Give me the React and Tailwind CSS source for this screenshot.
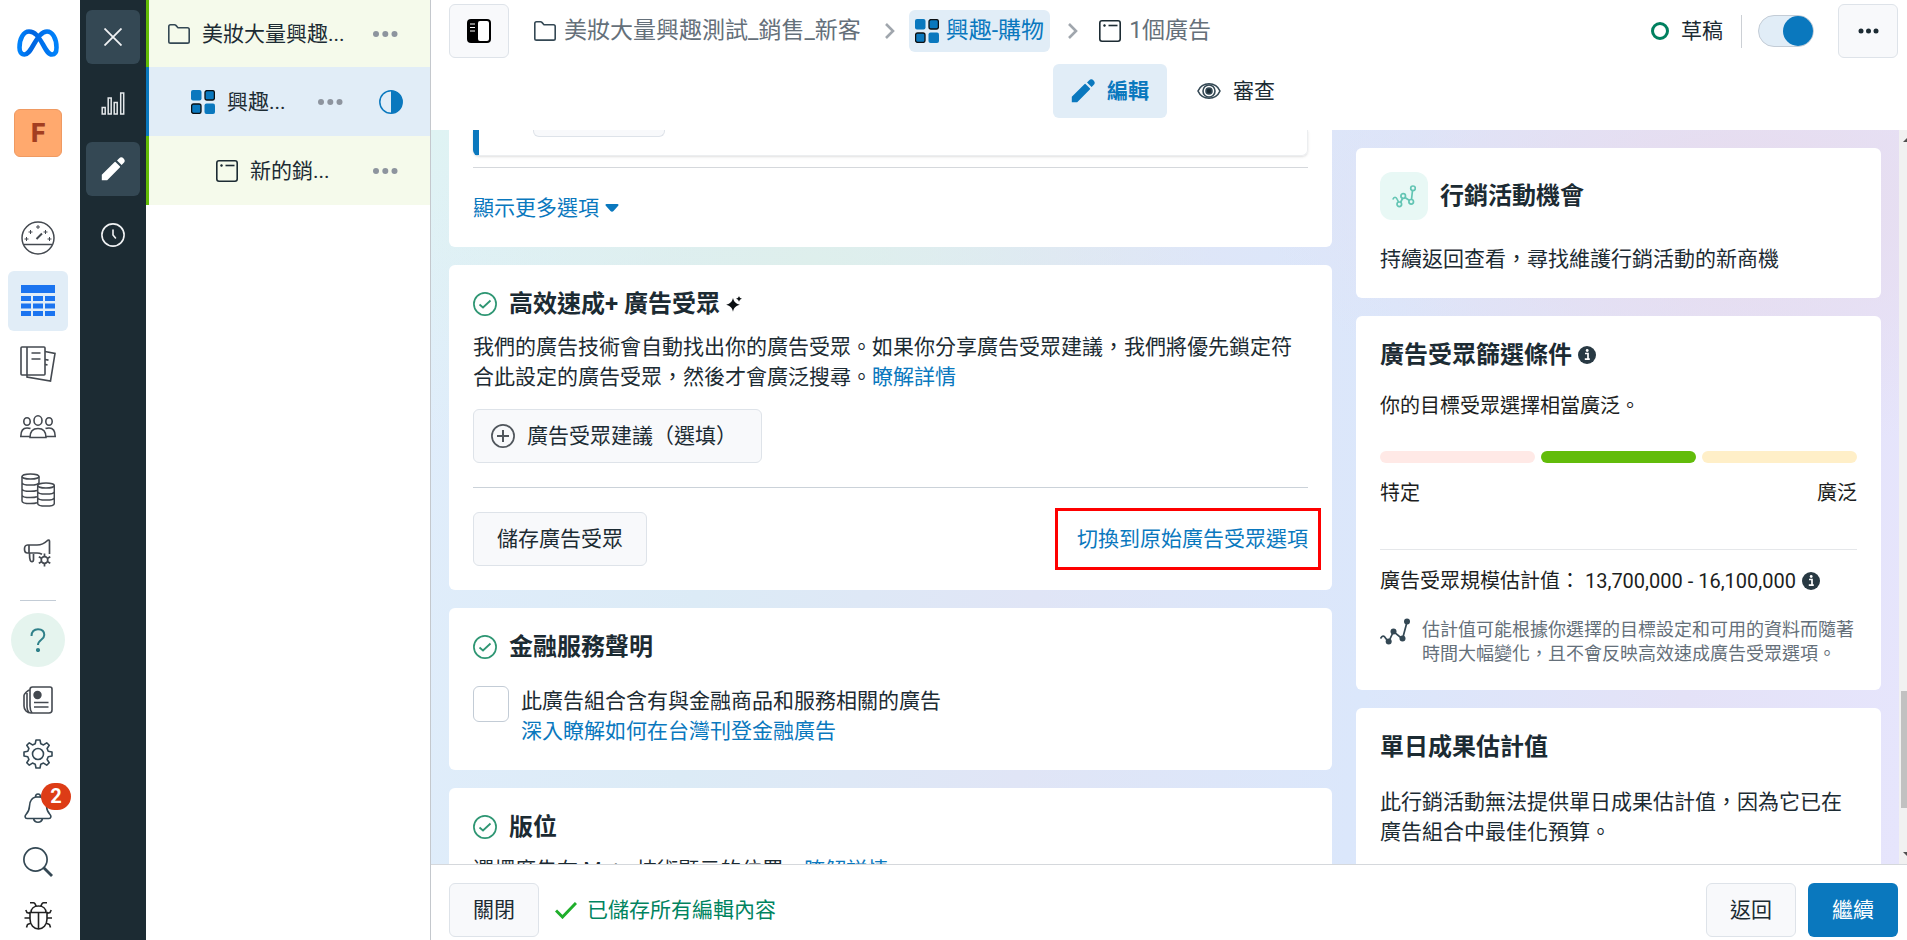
import { useState } from 'react';
import clsx from 'clsx';

const LINK = 'text-[#0a78be] hover:underline';
const OUTLINE_BUTTON =
  'flex items-center justify-center rounded-md border border-[#dee3e9] bg-[#f8f9fb] h-[54px] shrink-0';

/* ---------- icons ---------- */

function MetaLogo() {
  return (
    <svg width="42" height="28" viewBox="0 0 42 28" fill="none" strokeWidth="4.6">
      <defs>
        <linearGradient id="meta" x1="0" x2="1" y1="0" y2="0">
          <stop offset="0" stopColor="#0082fb" />
          <stop offset="0.35" stopColor="#0064e0" />
          <stop offset="0.65" stopColor="#0073ee" />
          <stop offset="1" stopColor="#0082fb" />
        </linearGradient>
      </defs>
      <path
        stroke="url(#meta)"
        strokeLinejoin="round"
        d="M2.500 18.500C2.500 9.500 6.500 2.500 12 2.500c6 0 9.500 5 14 13 3.500 6.500 5.500 10 9 10 3 0 4.500-2.500 4.500-7 0-9-4-16-9.500-16-5 0-8.500 4.500-13 12.500-4.500 8-6.500 10.500-9.500 10.500-3.500 0-5-3-5-7z"
      />
    </svg>
  );
}

function GaugeIcon() {
  return (
    <svg width="34" height="34" viewBox="0 0 34 34" fill="none" stroke="#444950" strokeWidth="1.500">
      <circle cx="17" cy="17" r="16" />
      <path d="M3 23.500h28" />
      <path d="M15.500 18l5.500-5.500" strokeWidth="2" />
      <path d="M17 4v4M15 6h4M9.500 9v4M7.500 11h4M24.500 9v4M22.500 11h4M5.500 16v4M3.500 18h4M28.500 16v4M26.500 18h4" strokeWidth="1" />
    </svg>
  );
}

function TableIcon() {
  return (
    <svg width="34" height="32" viewBox="0 0 34 32" fill="#1b74f0">
      <path d="M0 0h34v8H0zM0 11h10v5H0zM12 11h10v5H12zM24 11h10v5H24zM0 18.500h10v5H0zM12 18.500h10v5H12zM24 18.500h10v5H24zM0 26h10v5H0zM12 26h10v5H12zM24 26h10v5H24z" />
    </svg>
  );
}

function PagesIcon() {
  return (
    <svg width="36" height="36" viewBox="0 0 36 36" fill="none" stroke="#444950" strokeWidth="1.600">
      <rect x="1" y="1" width="24" height="28" rx="1" />
      <path d="M7 1v28M11.500 7h9M11.500 13h9M25 5.500l10 2-4.500 27.500-23.500-4v-2M25 13.500l3.500.6M25 18.500l2.500.4" />
    </svg>
  );
}

function PeopleIcon() {
  return (
    <svg width="36" height="24" viewBox="0 0 36 24" fill="none" stroke="#444950" strokeWidth="1.600">
      <ellipse cx="18" cy="5.500" rx="4" ry="4.700" />
      <ellipse cx="7" cy="6.500" rx="3.200" ry="3.700" />
      <ellipse cx="29" cy="6.500" rx="3.200" ry="3.700" />
      <path d="M10 22.500c0-6 3-9 8-9s8 3 8 9zM10.500 13.500C9.500 13 8 13 7 13c-4 0-6.200 3-6.200 8.500H10M25.500 13.500c1-.5 2.500-.5 3.500-.5 4 0 6.200 3 6.200 8.500H26" />
    </svg>
  );
}

function CoinsIcon() {
  return (
    <svg width="34" height="34" viewBox="0 0 34 34" fill="none" stroke="#444950" strokeWidth="1.500">
      <ellipse cx="9.500" cy="3.500" rx="8.500" ry="2.600" />
      <path d="M1 3.500v24.500c0 1.600 4 2.600 8.500 2.600 2.500 0 5-.3 6.500-.8M18 3.500v7M1 9.500c0 1.600 4 2.600 8.500 2.600S18 11 18 9.500M1 15.700c0 1.600 4 2.600 8.500 2.600 2.500 0 5-.3 6.500-.8M1 22c0 1.600 4 2.600 8.500 2.600 2.500 0 5-.3 6.500-.8" />
      <ellipse cx="25" cy="12.500" rx="8.300" ry="2.600" />
      <path d="M16.700 12.500v18c0 1.600 4 2.600 8.300 2.600s8.300-1 8.300-2.600v-18M16.700 18.500c0 1.600 4 2.600 8.300 2.600s8.300-1 8.300-2.600M16.700 24.500c0 1.600 4 2.600 8.300 2.600s8.300-1 8.300-2.600" />
    </svg>
  );
}

function MegaphoneIcon() {
  return (
    <svg width="30" height="28" viewBox="0 0 30 28" fill="none" stroke="#444950" strokeWidth="1.700" strokeLinejoin="round">
      <path d="M6 6h8c4 0 8-2 10.500-4.500 1-.9 2-.5 2 .8V15M6 6H4.500C2.500 6 1.500 8 1.500 10s1 4 3 4H14c2 0 3.500.5 5 1.300M6 6v8M6.500 14.500c0 3 0 5 .8 7 .7 1.700 3.200 1.500 3.200-.5v-6" />
      <circle cx="21.500" cy="21" r="3.300" />
      <path d="M21.500 14.500v3M21.500 24.500v3M15.800 17.800l2.700 1.500M24.600 22.700l2.700 1.500M15.800 24.200l2.700-1.500M24.600 19.300l2.700-1.500" />
    </svg>
  );
}

function NewsIcon() {
  return (
    <svg width="30" height="28" viewBox="0 0 30 28" fill="none" stroke="#444950" strokeWidth="1.600" strokeLinejoin="round">
      <path d="M7 3.500C7 2 8 1 9.500 1H27c1.300 0 2 .8 2 2v21c0 2-.8 3-3 3H8c-4 0-7-3-7-7V9.500C1 8 4 5 7 3.500zM7 3.500V20c0 3 .5 5 2 7M4 7v14c0 2 .8 4 2 5M11 16.500h14.500M11 21h14.500" />
      <circle cx="14.500" cy="9" r="3.400" fill="#444950" />
    </svg>
  );
}

function GearIcon() {
  return (
    <svg width="30" height="30" viewBox="0 0 30 30" fill="none" stroke="#344854" strokeWidth="1.600" strokeLinejoin="round">
      <circle cx="15" cy="15" r="5.500" />
      <path d="M13 1h4l.8 3.800 2.700 1.100 3.200-2.100 2.500 2.500-2.100 3.200 1.100 2.700L29 13v4l-3.800.8-1.100 2.700 2.100 3.200-2.500 2.500-3.200-2.100-2.700 1.100L17 29h-4l-.8-3.800-2.700-1.100-3.200 2.100-2.500-2.500 2.100-3.200-1.100-2.700L1 17v-4l3.800-.8 1.100-2.700-2.100-3.200 2.500-2.500 3.200 2.100 2.700-1.100z" />
    </svg>
  );
}

function BellIcon() {
  return (
    <svg width="28" height="30" viewBox="0 0 28 30" fill="none" stroke="#344854" strokeWidth="1.600" strokeLinejoin="round">
      <path d="M11.500 4C11.500 2 12.500 1 14 1s2.500 1 2.500 3c4 1 5.800 4.500 6 9 .2 4 1.500 6.500 3.500 8.500 1.500 1.600 1 4-1 4H3c-2 0-2.500-2.400-1-4 2-2 3.300-4.500 3.500-8.500.2-4.500 2-8 6-9zM9.500 25.500c.5 2.300 2.200 3.700 4.500 3.700s4-1.400 4.500-3.700" />
      <path d="M11.500 4h5" />
    </svg>
  );
}

function SearchIcon() {
  return (
    <svg width="30" height="30" viewBox="0 0 30 30" fill="none" stroke="#344854">
      <circle cx="12.500" cy="12.500" r="11.600" strokeWidth="1.700" />
      <path d="M20.500 20.500l8.500 8.500" strokeWidth="2.800" />
    </svg>
  );
}

function BugIcon() {
  return (
    <svg width="28" height="28" viewBox="0 0 28 28" fill="none" stroke="#222" strokeWidth="1.600">
      <path d="M6 10.500h17V17c0 6-4 10-8.500 10S6 23 6 17zM14.500 10.500V27M7 10.500C7 6.500 10 4 14.500 4S22 6.500 22 10.500M6 .8h3.500c1 0 2 1.500 2.500 3.400M23 .8h-3.500c-1 0-2 1.500-2.500 3.400M6.500 11.500L3 10.500 1.800 8M6 16H.5M7 21l-3.500 1.500-1 3M22.500 11.500l3.500-1L27.200 8M23 16h5M22 21l3.500 1.500 1 3" />
    </svg>
  );
}

function ChartIcon() {
  return (
    <svg width="24" height="23" viewBox="0 0 24 23" fill="none" stroke="#e4e8eb" strokeWidth="1.500">
      <path d="M1.200 15.500h3v6.500h-3zM7.200 6h3v16h-3zM13.200 10.500h3V22h-3zM19.700 1h3v21h-3z" />
    </svg>
  );
}

function PencilIcon() {
  return (
    <svg width="24" height="24" viewBox="0 0 24 24" fill="currentColor">
      <path d="M.8 23.200v-5.400L13.400 5.200a1 1 0 0 1 1.400 0l4 4a1 1 0 0 1 0 1.400L6.200 23.200zM16 3.400l2-2a3 3 0 0 1 4.600 4.600l-2 2z" />
    </svg>
  );
}

function ClockIcon() {
  return (
    <svg width="24" height="24" viewBox="0 0 24 24" fill="none" stroke="#f0f2f4" strokeWidth="1.600" strokeLinecap="round">
      <circle cx="12" cy="12" r="11.100" />
      <path d="M12 7v5l2.500 3" />
    </svg>
  );
}

function FolderIcon() {
  return (
    <svg width="22" height="20" viewBox="0 0 22 20" fill="none" stroke="#344854" strokeWidth="1.600" strokeLinejoin="round" className="shrink-0">
      <path d="M.8 2.500C.8 1.500 1.500.8 2.500.8h4c.6 0 1 .2 1.400.6L10 3.700h9.500c1 0 1.700.7 1.700 1.700v12c0 1-.7 1.700-1.700 1.700h-17c-1 0-1.700-.7-1.700-1.700z" />
    </svg>
  );
}

function AdSetIcon() {
  return (
    <svg width="24" height="24" viewBox="0 0 24 24" fill="#0a78be" className="shrink-0">
      <rect width="10.500" height="10.500" rx="2" />
      <rect x="13.500" y="13.500" width="10.500" height="10.500" rx="2" />
      <rect x="14" y=".6" width="9.400" height="9.400" rx="2" stroke="#0b0f12" strokeWidth="1.300" />
      <rect x=".6" y="14" width="9.400" height="9.400" rx="2" stroke="#0b0f12" strokeWidth="1.300" />
    </svg>
  );
}

function AdIcon() {
  return (
    <svg width="22" height="22" viewBox="0 0 22 22" fill="none" stroke="#1c2b33" strokeWidth="1.600" className="shrink-0">
      <rect x=".8" y=".8" width="20.400" height="20.400" rx="2.200" />
      <path d="M9.500 5.500h9" />
      <circle cx="5.500" cy="5.500" r="1" fill="#1c2b33" strokeWidth=".6" />
    </svg>
  );
}

function Dots() {
  return (
    <svg width="25" height="6" viewBox="0 0 25 6" fill="#8d949e">
      <circle cx="3" cy="3" r="3" />
      <circle cx="12.300" cy="3" r="3" />
      <circle cx="21.500" cy="3" r="3" />
    </svg>
  );
}

function ContrastIcon() {
  return (
    <svg width="24" height="24" viewBox="0 0 24 24">
      <circle cx="12" cy="12" r="11.200" fill="none" stroke="#0a78be" strokeWidth="1.500" />
      <path d="M12 .8a11.200 11.200 0 0 1 0 22.400z" fill="#0a78be" />
    </svg>
  );
}

function ChevronIcon() {
  return (
    <svg width="10" height="16" viewBox="0 0 10 16" fill="none" stroke="#a0a6ad" strokeWidth="2.600" className="shrink-0">
      <path d="M1 1l7 7-7 7" />
    </svg>
  );
}

function EyeIcon() {
  return (
    <svg width="24" height="16" viewBox="0 0 24 16" fill="none" stroke="#344854" strokeWidth="1.600">
      <path d="M1 8c2-4.500 6-7.200 11-7.200S21 3.500 23 8c-2 4.500-6 7.200-11 7.200S3 12.500 1 8z" />
      <circle cx="12" cy="8" r="6" />
      <circle cx="12" cy="8" r="3" fill="#1c2b33" />
    </svg>
  );
}

function CheckCircle() {
  return (
    <svg width="24" height="24" viewBox="0 0 24 24" fill="none" stroke="#2e9673" strokeWidth="1.700" className="shrink-0">
      <circle cx="12" cy="12" r="11.100" />
      <path d="M6.500 12.500l3.500 3 7.500-7" strokeWidth="1.800" />
    </svg>
  );
}

function PlusCircle() {
  return (
    <svg width="24" height="24" viewBox="0 0 24 24" fill="none" stroke="#50565c" className="shrink-0">
      <circle cx="12" cy="12" r="11.100" strokeWidth="1.700" />
      <path d="M12 6v12M6 12h12" strokeWidth="2" />
    </svg>
  );
}

function InfoIcon() {
  return (
    <svg width="18" height="18" viewBox="0 0 18 18" className="shrink-0">
      <circle cx="9" cy="9" r="9" fill="#283943" />
      <path d="M7 7.500h3v5.500M6.800 13.200h5" stroke="#fff" strokeWidth="1.700" fill="none" />
      <circle cx="9.200" cy="4.500" r="1.400" fill="#fff" />
    </svg>
  );
}

function SparkleIcon() {
  return (
    <svg width="16" height="16" viewBox="0 0 16 16" fill="#0b0f12">
      <path d="M7 2c1 3.700 2.500 5.500 6.800 6.800C9.500 10 8 11.700 7 15.800 6 11.700 4.500 10 .2 8.800 4.500 7.500 6 5.700 7 2zM13 0c.5 1.500 1.100 2.200 3 2.700-1.900.6-2.500 1.300-3 3-.5-1.700-1.100-2.400-3-3 1.900-.5 2.500-1.200 3-2.700z" />
    </svg>
  );
}

function TrendIcon({ hollow }) {
  if (hollow) {
    return (
      <svg width="24" height="23" viewBox="0 0 24 23" fill="none" stroke="#63c5b4" strokeWidth="1.700">
        <path d="M.8 14.500c1.200-3 3.200-3 4.500 0l1.200 2.500M8.500 17.500l2-4M13 12.500l4.500 3M19.500 14.500l1-9" />
        <circle cx="7.300" cy="19.300" r="2.300" />
        <circle cx="11.200" cy="11" r="2.300" />
        <circle cx="19.200" cy="16.800" r="2.300" />
        <circle cx="21" cy="3.300" r="2.300" />
      </svg>
    );
  }
  return (
    <svg width="30" height="27" viewBox="0 0 30 27" stroke="#344854" fill="none" strokeWidth="1.700" className="shrink-0">
      <path d="M.5 20.500C2 17.500 4 17.500 5.500 20l3 4 5-10.500 9 7.500 4.500-17" />
      <g fill="#344854" stroke="none">
        <circle cx="8.700" cy="23.500" r="3" />
        <circle cx="13.500" cy="13.500" r="3" />
        <circle cx="22.500" cy="20.500" r="3" />
        <circle cx="27" cy="3.500" r="3" />
      </g>
    </svg>
  );
}

/* ---------- navigation ---------- */

const NAV = [
  { label: '帳號總覽', Icon: GaugeIcon },
  { label: '行銷活動', Icon: TableIcon, active: true },
  { label: '廣告報告', Icon: PagesIcon },
  { label: '廣告受眾', Icon: PeopleIcon },
  { label: '帳單與付款', Icon: CoinsIcon },
  { label: '廣告設定', Icon: MegaphoneIcon },
];

const TOOLS = [
  { label: '最新消息', Icon: NewsIcon },
  { label: '設定', Icon: GearIcon },
  { label: '通知', Icon: BellIcon, badge: 2 },
  { label: '搜尋', Icon: SearchIcon },
  { label: '回報問題', Icon: BugIcon },
];

function Rail() {
  return (
    <nav className="flex w-20 shrink-0 flex-col items-center bg-white pr-1 pt-4">
      <a href="#" aria-label="Meta" className="flex h-[54px] w-[60px] shrink-0 items-center justify-center">
        <MetaLogo />
      </a>
      <button className="mt-[39px] size-12 shrink-0 rounded-md border border-[#ef9a62] bg-[#ffa96e] text-[26px] font-black text-[#a33e20]">
        F
      </button>

      <div className="mt-[51px] flex flex-col gap-[3px]">
        {NAV.map(({ label, Icon, active }) => (
          <a
            key={label}
            href="#"
            aria-label={label}
            className={clsx('flex size-[60px] items-center justify-center rounded-md', active && 'bg-[#e1edf7]')}
          >
            <Icon />
          </a>
        ))}
      </div>

      <div className="mt-[17px] h-px w-9 shrink-0 bg-[#c3ccd6]" />
      <button
        aria-label="說明"
        className="mt-3 flex size-[54px] shrink-0 items-center justify-center rounded-full bg-[#e5f4ee]"
      >
        <svg width="16" height="24" viewBox="0 0 16 24" fill="none" stroke="#2f8089" strokeWidth="2">
          <path d="M1.500 8C1.500 3.800 4 1.200 8 1.200s6.300 2.300 6.300 5.800c0 5-6.300 4.500-6.300 10" />
          <circle cx="8" cy="22" r="1.100" fill="#2f8089" />
        </svg>
      </button>

      <div className="mt-1.5 flex flex-col">
        {TOOLS.map(({ label, Icon, badge }) => (
          <button key={label} aria-label={label} className="relative flex h-[54px] w-[60px] items-center justify-center">
            <Icon />
            {badge && (
              <span className="absolute -right-[3px] top-0.5 flex h-[27px] w-[30px] items-center justify-center rounded-full bg-[#dd3c16] text-[20px]/[27px] font-bold text-white">
                {badge}
              </span>
            )}
          </button>
        ))}
      </div>
    </nav>
  );
}

function Sidebar() {
  return (
    <div className="flex w-[66px] shrink-0 flex-col items-center gap-3 bg-[#1c2b33] pt-2.5">
      <button aria-label="關閉" className="flex size-[54px] items-center justify-center rounded-md bg-[#344854]">
        <svg width="18" height="18" viewBox="0 0 18 18" stroke="#f0f2f4" strokeWidth="1.800">
          <path d="M.5.5l17 17M17.500.5l-17 17" />
        </svg>
      </button>
      <button aria-label="圖表" className="flex size-[54px] items-center justify-center rounded-md">
        <ChartIcon />
      </button>
      <button
        aria-label="編輯"
        className="flex size-[54px] items-center justify-center rounded-md bg-[#344854] text-white"
      >
        <PencilIcon />
      </button>
      <button aria-label="歷史紀錄" className="flex size-[54px] items-center justify-center rounded-md">
        <ClockIcon />
      </button>
    </div>
  );
}

function Tree() {
  return (
    <aside className="w-[285px] shrink-0 border-r border-[#c4c8cd] bg-white text-[21px]/[30px]">
      <div className="flex h-[67px] items-center border-l-[3px] border-[#62bc06] bg-[#f5faeb] pl-[19px] pr-8">
        <FolderIcon />
        <span className="ml-3 flex-1">美妝大量興趣...</span>
        <button aria-label="更多">
          <Dots />
        </button>
      </div>
      <div className="flex h-[69px] items-center border-l-[3px] border-[#0a78be] bg-[#e1edf7] pl-[42px] pr-[27px]">
        <AdSetIcon />
        <span className="ml-3 flex-1">興趣...</span>
        <button aria-label="更多">
          <Dots />
        </button>
        <span className="ml-9">
          <ContrastIcon />
        </span>
      </div>
      <div className="flex h-[69px] items-center border-l-[3px] border-[#62bc06] bg-[#f5faeb] pl-[67px] pr-8">
        <AdIcon />
        <span className="ml-3 flex-1">新的銷...</span>
        <button aria-label="更多">
          <Dots />
        </button>
      </div>
    </aside>
  );
}

/* ---------- header ---------- */

function Header({ enabled, onToggle }) {
  return (
    <header className="shrink-0 bg-white pb-3 pt-1">
      <div className="flex items-center pl-[18px] pr-[9px]">
        <button aria-label="切換面板" className={clsx(OUTLINE_BUTTON, 'w-[60px]')}>
          <svg width="24" height="24" viewBox="0 0 24 24">
            <rect width="24" height="24" rx="4" fill="#000" />
            <rect x="11" y="2" width="11" height="20" rx="2" fill="#fff" />
            <path d="M3 5h5M3 8.500h5M3 12h5" stroke="#fff" strokeWidth="1.200" />
          </svg>
        </button>
        <nav className="ml-[25px] flex items-center text-[23px]/[30px] text-[#65707a]">
          <a href="#" className="flex items-center gap-2">
            <FolderIcon />
            美妝大量興趣測試_銷售_新客
          </a>
          <span className="ml-6 mr-3.5">
            <ChevronIcon />
          </span>
          <a href="#" className="flex h-[42px] items-center gap-[7px] rounded-md bg-[#e1edf7] px-1.5 text-[#0a78be]">
            <AdSetIcon />
            興趣-購物
          </a>
          <span className="ml-[18px] mr-[21px]">
            <ChevronIcon />
          </span>
          <a href="#" className="flex items-center gap-2">
            <AdIcon />
            1個廣告
          </a>
        </nav>

        <div className="ml-auto flex items-center">
          <span className="size-[18px] rounded-full border-[3px] border-[#00805f]" />
          <span className="ml-3 text-[21px]/[30px]">草稿</span>
          <span className="ml-[18px] h-[33px] w-px bg-[#ccd0d5]" />
          <label className="ml-4 mr-6 flex">
            <input type="checkbox" className="peer sr-only" aria-label="啟用" checked={enabled} onChange={onToggle} />
            <span className="flex h-8 w-14 items-center justify-start rounded-full border border-[#c3ccd6] bg-[#e1edf7] peer-checked:justify-end">
              <span className="size-[30px] rounded-full bg-[#0a78be]" />
            </span>
          </label>
          <button aria-label="更多選項" className={clsx(OUTLINE_BUTTON, 'w-[60px]')}>
            <svg width="21" height="6" viewBox="0 0 21 6" fill="#1c2b33">
              <circle cx="3" cy="3" r="2.500" />
              <circle cx="10.500" cy="3" r="2.500" />
              <circle cx="18" cy="3" r="2.500" />
            </svg>
          </button>
        </div>
      </div>

      <div className="mt-1.5 flex justify-center gap-3 pl-2 text-[21px]/[30px]">
        <button className="flex h-[54px] items-center gap-3 rounded-md bg-[#e1edf7] px-[18px] font-bold text-[#0a78be]">
          <PencilIcon />
          編輯
        </button>
        <button className="flex h-[54px] items-center gap-3 rounded-md px-[18px]">
          <EyeIcon />
          審查
        </button>
      </div>
    </header>
  );
}

/* ---------- content ---------- */

function Card({ className, children }) {
  return <section className={clsx('rounded-md bg-white p-6', className)}>{children}</section>;
}

function CheckedTitle({ children }) {
  return (
    <h2 className="flex items-center gap-3 text-[24px]/[30px] font-bold">
      <CheckCircle />
      <span className="flex items-center">{children}</span>
    </h2>
  );
}

function MainColumn() {
  return (
    <div className="flex min-w-0 flex-1 flex-col gap-[18px]">
      <section className="rounded-b-md bg-white px-6 pb-6">
        <div className="h-[26px] rounded-b-md border-b border-l-[6px] border-r border-[#eceef0] border-l-[#0a78be] pl-[54px] shadow-sm">
          <div className="h-[7px] w-[132px] rounded-b-md border border-t-0 border-[#dee3e9] bg-[#f8f9fb]" />
        </div>
        <div className="mt-[11px] h-px bg-[#d5d8dc]" />
        <button className={clsx('mt-[25px] flex items-center gap-1.5 text-[21px]/[30px]', LINK)}>
          顯示更多選項
          <svg width="14" height="8" viewBox="0 0 14 8" fill="#0a78be">
            <path d="M1.500 0h11c1 0 1.300 1 .7 1.700L8.500 7c-.8 1-2.200 1-3 0L.8 1.700C.2 1 .5 0 1.500 0z" />
          </svg>
        </button>
      </section>

      <Card>
        <CheckedTitle>
          高效速成+ 廣告受眾
          <span className="ml-1.5">
            <SparkleIcon />
          </span>
        </CheckedTitle>
        <p className="mt-[13px] text-[21px]/[30px]">
          我們的廣告技術會自動找出你的廣告受眾。如果你分享廣告受眾建議，我們將優先鎖定符合此設定的廣告受眾，然後才會廣泛搜尋。
          <a href="#" className={LINK}>瞭解詳情</a>
        </p>
        <button className={clsx(OUTLINE_BUTTON, 'mt-[17px] gap-3 pl-[17px] pr-6 text-[21px]/[30px]')}>
          <PlusCircle />
          廣告受眾建議（選填）
        </button>
        <div className="mt-6 h-px bg-[#cbd2d9]" />
        <div className="mt-6 flex items-center justify-between text-[21px]/[30px]">
          <button className={clsx(OUTLINE_BUTTON, 'px-[23px]')}>儲存廣告受眾</button>
          <div className="relative">
            <a href="#" className={LINK}>切換到原始廣告受眾選項</a>
            <div className="pointer-events-none absolute -inset-y-4 -left-[22px] -right-[13px] border-[3px] border-[#fe0000]" />
          </div>
        </div>
      </Card>

      <Card>
        <CheckedTitle>金融服務聲明</CheckedTitle>
        <div className="mt-6 flex items-start gap-3 text-[21px]/[30px]">
          <input
            id="finance"
            type="checkbox"
            className="size-9 shrink-0 appearance-none rounded-md border border-[#c3ccd6] bg-white checked:bg-[#0a78be]"
          />
          <div>
            <label htmlFor="finance" className="block">此廣告組合含有與金融商品和服務相關的廣告</label>
            <a href="#" className={LINK}>深入瞭解如何在台灣刊登金融廣告</a>
          </div>
        </div>
      </Card>

      <Card>
        <CheckedTitle>版位</CheckedTitle>
        <p className="mt-[13px] text-[21px]/[30px]">
          選擇廣告在 Meta 技術顯示的位置。
          <a href="#" className={LINK}>瞭解詳情</a>
        </p>
      </Card>
    </div>
  );
}

function InsightColumn() {
  return (
    <div className="flex w-[525px] shrink-0 flex-col gap-[18px] pt-[18px]">
      <Card>
        <div className="flex items-center gap-3">
          <span className="flex size-12 items-center justify-center rounded-xl bg-[#e8f8f5]">
            <TrendIcon hollow />
          </span>
          <h2 className="text-[24px]/[30px] font-bold">行銷活動機會</h2>
        </div>
        <p className="mt-6 text-[21px]/[30px]">持續返回查看，尋找維護行銷活動的新商機</p>
      </Card>

      <Card>
        <h2 className="flex items-center gap-1.5 text-[24px]/[30px] font-bold">
          廣告受眾篩選條件
          <InfoIcon />
        </h2>
        <p className="mt-[21px] text-[20px]/[30px] text-[#1c1e21]">你的目標受眾選擇相當廣泛。</p>
        <div className="mt-[30px] grid h-3 grid-cols-3 gap-1.5">
          <span className="rounded-full bg-[#ffe9e6]" />
          <span className="rounded-full bg-[#62bc0a]" />
          <span className="rounded-full bg-[#ffefc8]" />
        </div>
        <div className="mt-[15px] flex justify-between text-[20px]/[30px] text-[#1c1e21]">
          <span>特定</span>
          <span>廣泛</span>
        </div>
        <div className="mt-[41px] h-px bg-[#e5e7ea]" />
        <p className="mt-4 flex items-center gap-1.5 text-[20px]/[30px] text-[#1c1e21]">
          <span>廣告受眾規模估計值： 13,700,000 - 16,100,000</span>
          <InfoIcon />
        </p>
        <div className="mt-[22px] flex items-start gap-3 text-[18px]/[24px] text-[#65707a]">
          <TrendIcon />
          <p className="-mr-2">估計值可能根據你選擇的目標設定和可用的資料而隨著時間大幅變化，且不會反映高效速成廣告受眾選項。</p>
        </div>
      </Card>

      <Card className="h-[260px] shrink-0">
        <h2 className="text-[24px]/[30px] font-bold">單日成果估計值</h2>
        <p className="mt-[25px] text-[21px]/[30px]">此行銷活動無法提供單日成果估計值，因為它已在廣告組合中最佳化預算。</p>
      </Card>
    </div>
  );
}

function Scrollbar() {
  return (
    <div className="flex w-2 shrink-0 flex-col items-end overflow-hidden bg-[#f1f1f1] pl-0.5">
      <svg width="4" height="4" viewBox="0 0 4 4" fill="#505050" className="mt-2">
        <path d="M4 0v4H0z" />
      </svg>
      <div className="flex-[549]" />
      <div className="w-full flex-[117] bg-[#c1c1c1]" />
      <div className="flex-[44]" />
      <svg width="4" height="4" viewBox="0 0 4 4" fill="#505050" className="mb-2">
        <path d="M0 0h4v4z" />
      </svg>
    </div>
  );
}

function Footer() {
  return (
    <footer className="flex shrink-0 items-center border-t border-[#d5d8dc] bg-white pb-[3px] pl-[18px] pr-[9px] pt-[18px] text-[21px]/[30px]">
      <button className={clsx(OUTLINE_BUTTON, 'w-[90px]')}>關閉</button>
      <svg width="22" height="17" viewBox="0 0 22 17" fill="none" stroke="#1fae2b" strokeWidth="3" className="ml-4">
        <path d="M1 8.500l6.500 6.500L21 1" />
      </svg>
      <span className="ml-2.5 flex-1 text-[#00845f]">已儲存所有編輯內容</span>
      <button className={clsx(OUTLINE_BUTTON, 'w-[90px]')}>返回</button>
      <button className="ml-3 h-[54px] w-[90px] rounded-md bg-[#0a78be] text-white">繼續</button>
    </footer>
  );
}

export default function App() {
  const [enabled, setEnabled] = useState(true);

  return (
    <div
      lang="zh-Hant"
      className="flex h-screen overflow-hidden bg-white font-[Roboto,'Noto_Sans_CJK_TC',sans-serif] text-[#1c2b33]"
    >
      <Rail />
      <Sidebar />
      <Tree />
      <main className="flex min-w-0 flex-1 flex-col">
        <Header enabled={enabled} onToggle={() => setEnabled(!enabled)} />
        <div className="flex min-h-0 flex-1">
          <div className="flex min-w-0 flex-1 gap-6 overflow-hidden bg-[radial-gradient(ellipse_at_26%_18%,#deefec_0%,transparent_26%),radial-gradient(ellipse_at_90%_10%,#e7dcee_0%,transparent_26%),radial-gradient(ellipse_at_0%_0%,#dff3f3_0%,transparent_30%),linear-gradient(95deg,#e0edfb_0%,#dcebf6_20%,#e0e5f6_42%,#dbe7fb_64%,#e4e2f7_85%,#e6e5fc_100%)] px-[18px]">
            <MainColumn />
            <InsightColumn />
          </div>
          <Scrollbar />
        </div>
        <Footer />
      </main>
    </div>
  );
}
